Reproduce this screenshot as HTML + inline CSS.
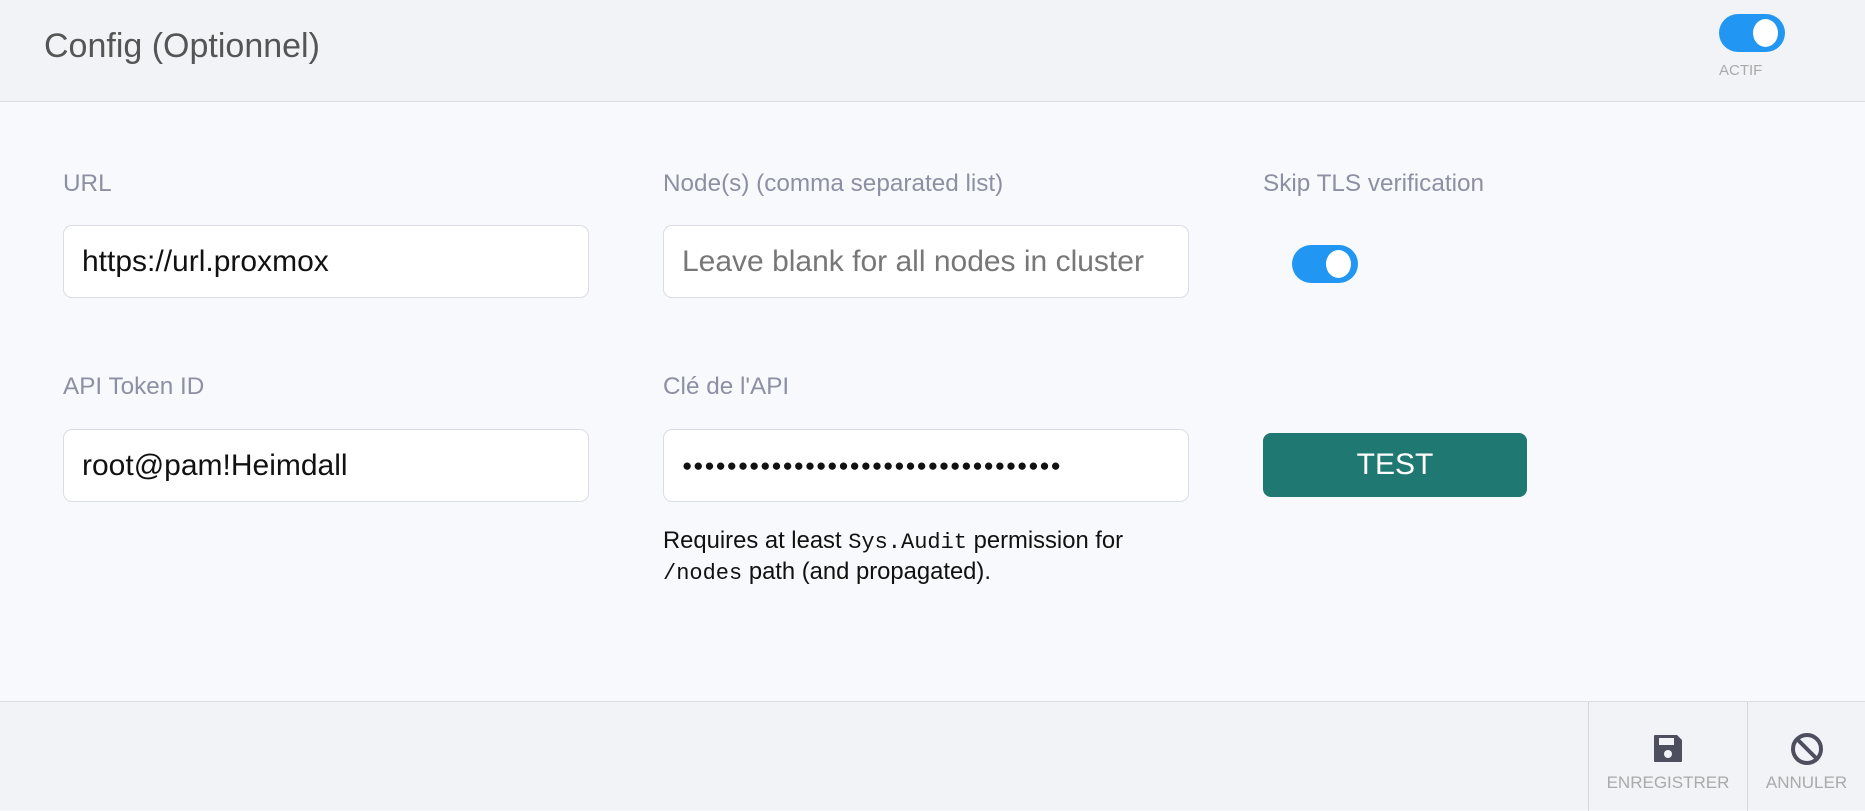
<!DOCTYPE html>
<html><head><style>
*{box-sizing:border-box;margin:0;padding:0}
body{width:1865px;height:810px;background:#f8f9fc;font-family:"Liberation Sans",sans-serif;position:relative;overflow:hidden}
.hdr{position:absolute;left:0;top:0;width:1865px;height:102px;background:#f2f3f7;border-bottom:1px solid #dcdde2}
.title{position:absolute;left:44px;top:27px;font-size:34px;color:#555}
.tog{position:absolute;width:66px;height:38px;border-radius:19px;background:#2196f3}
.tog::after{content:"";position:absolute;right:7px;top:5px;width:25px;height:28px;border-radius:50%;background:#fff}
.lbl{position:absolute;font-size:24.3px;color:#8c90a2}
.inp{position:absolute;width:526px;height:73px;background:#fff;border:1px solid #dcdde4;border-radius:9px;font-size:30px;padding-left:18px;line-height:71px;color:#111}
.btn{position:absolute;left:1263px;top:433px;width:264px;height:64px;background:#207873;border-radius:8px;color:#fff;font-size:30px;text-align:center;line-height:64px}
.help{position:absolute;left:663px;top:526px;font-size:23.8px;line-height:29px;color:#111}
.mono{font-family:"Liberation Mono",monospace;font-size:22px}
.ftr{position:absolute;left:0;top:701px;width:1865px;height:109px;background:#f2f3f7;border-top:1px solid #dcdde2}
.fb{position:absolute;top:0;height:109px;border-left:1px solid #d6d7dc;text-align:center;color:#aaa;font-size:17px}
.fb svg{position:absolute;left:50%;top:30px;transform:translateX(-50%)}
.fb span{position:absolute;left:0;right:0;top:71px}
</style></head><body>
<div class="hdr">
<div class="title">Config (Optionnel)</div>
<div class="tog" style="left:1719px;top:14px"></div>
<div style="position:absolute;left:1719px;top:62px;font-size:15px;color:#aaa">ACTIF</div>
</div>
<div class="lbl" style="left:63px;top:170px">URL</div>
<div class="lbl" style="left:663px;top:170px">Node(s) (comma separated list)</div>
<div class="lbl" style="left:1263px;top:170px">Skip TLS verification</div>
<div class="inp" style="left:63px;top:225px">https://url.proxmox</div>
<div class="inp" style="left:663px;top:225px;color:#777">Leave blank for all nodes in cluster</div>
<div class="tog" style="left:1292px;top:245px"></div>
<div class="lbl" style="left:63px;top:373px">API Token ID</div>
<div class="lbl" style="left:663px;top:373px">Clé de l'API</div>
<div class="inp" style="left:663px;top:429px;font-size:17px;letter-spacing:0.9px">●●●●●●●●●●●●●●●●●●●●●●●●●●●●●●●●●●</div>
<div class="inp" style="left:63px;top:429px">root@pam!Heimdall</div>
<div class="btn">TEST</div>
<div class="help">Requires at least <span class="mono">Sys.Audit</span> permission for<br><span class="mono">/nodes</span> path (and propagated).</div>
<div class="ftr">
<div class="fb" style="left:1588px;width:159px"><svg width="32" height="32" viewBox="0 0 32 32"><path d="M3 3h22l5 5v21a1 1 0 0 1-1 1H3a1 1 0 0 1-1-1V4a1 1 0 0 1 1-1z" fill="#4d4f5e"/><rect x="7" y="6" width="15" height="7" fill="#f2f3f7"/><circle cx="16" cy="22" r="4" fill="#f2f3f7"/></svg><span>ENREGISTRER</span></div>
<div class="fb" style="left:1747px;width:118px"><svg width="34" height="34" viewBox="0 0 34 34"><circle cx="17" cy="17" r="14" fill="none" stroke="#4d4f5e" stroke-width="4"/><path d="M8 8l18 18" stroke="#4d4f5e" stroke-width="4"/></svg><span>ANNULER</span></div>
</div>
</body></html>
